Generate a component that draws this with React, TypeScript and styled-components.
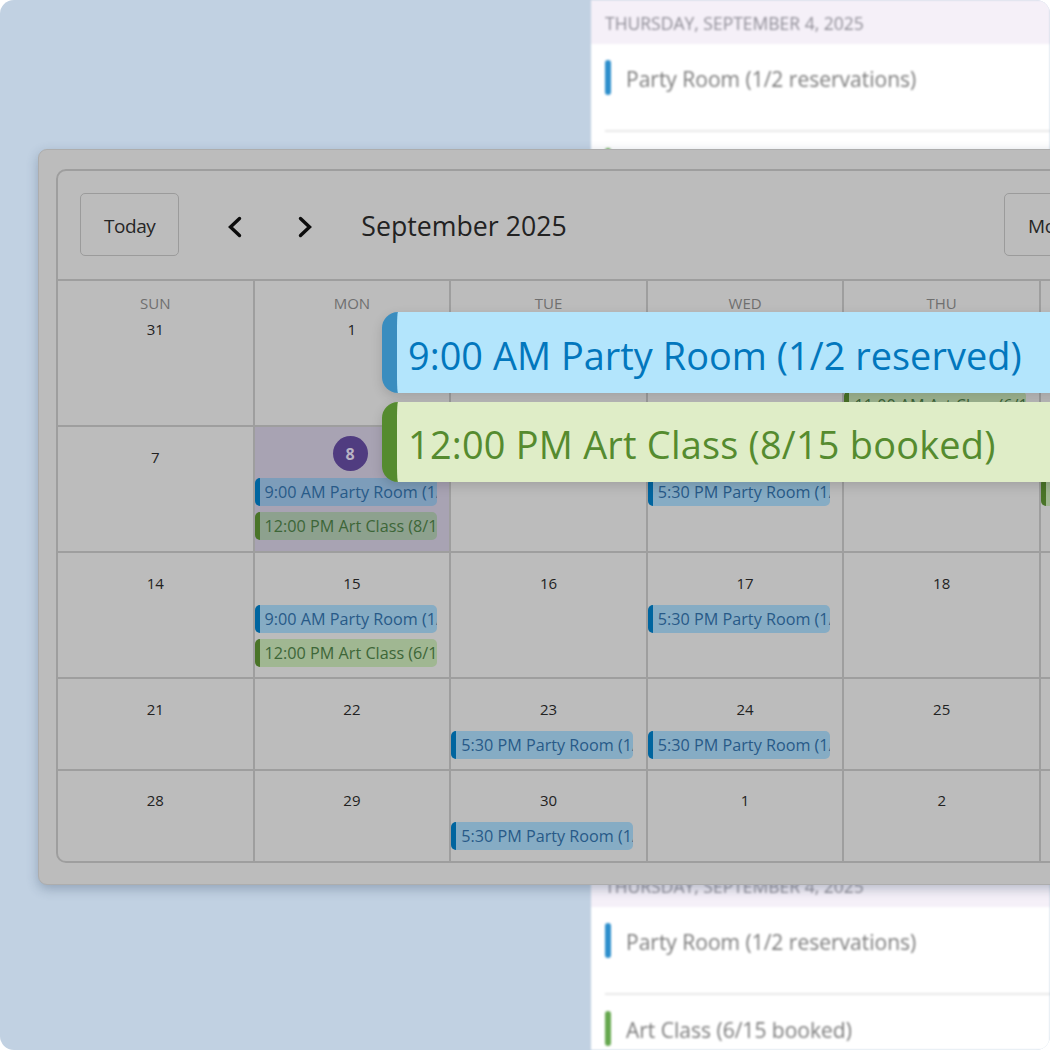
import React from "react";
import styled, { createGlobalStyle } from "styled-components";

const Global = createGlobalStyle`
  html, body { margin: 0; padding: 0; background: #fff; }
  body { font-family: "Open Sans", "Noto Sans", "Liberation Sans", sans-serif; }
`;

const Stage = styled.div`
  position: relative;
  width: 1050px;
  height: 1050px;
  overflow: hidden;
  border-radius: 14px;
  background: #c1d1e2;
  display: flex;
  padding-left: 591px;
  box-sizing: border-box;
`;

const AgendaPanel = styled.div`
  flex: 1;
  background: #fff;
  display: flex;
  flex-direction: column;
  gap: 643px;
  filter: blur(1.3px);
  border-top-right-radius: 10px;
  overflow: hidden;
`;

const AgendaGroup = styled.section`
  display: flex;
  flex-direction: column;
`;

const AgendaHeader = styled.div`
  height: 44px;
  box-sizing: border-box;
  background: #f5f0f8;
  padding: 12px 0 0 14px;
  font-size: 17.5px;
  line-height: 22px;
  font-weight: 500;
  color: #8f8d96;
`;

const AgendaRow = styled.div`
  display: flex;
  align-items: center;
  gap: 15px;
  height: 88px;
  box-sizing: border-box;
  margin-left: 14px;
  padding: 17px 0 36px;
  border-bottom: 2px solid #e8e8e8;
`;

const AgendaStripe = styled.span<{ $color: string }>`
  width: 6px;
  height: 35px;
  border-radius: 3px;
  background: ${(p) => p.$color};
`;

const AgendaText = styled.span`
  font-size: 21px;
  padding-top: 2px;
  color: #7c7c7c;
  font-weight: 500;
`;

const Card = styled.div`
  position: absolute;
  left: 38px;
  top: 149px;
  width: 1412px;
  height: 736px;
  box-sizing: border-box;
  padding: 19px 17px;
  background: #bcbcbc;
  border: 1px solid #adadad;
  border-radius: 9px;
  box-shadow: 0 4px 12px rgba(50, 70, 100, 0.32);
`;

const Calendar = styled.div`
  border: 2px solid #9e9e9e;
  border-radius: 10px;
  height: 694px;
  box-sizing: border-box;
  overflow: hidden;
  display: flex;
  flex-direction: column;
`;

const Toolbar = styled.div`
  height: 108px;
  flex: none;
  box-sizing: border-box;
  display: flex;
  align-items: center;
  padding: 0 22px 2px;
`;

const OutlineButton = styled.button`
  height: 63px;
  padding: 4px 23px 0;
  box-sizing: border-box;
  border: 1.5px solid #9b9b9b;
  border-radius: 5px;
  background: transparent;
  font-family: inherit;
  font-size: 19px;
  letter-spacing: -0.45px;
  color: #262626;
`;

const NavGroup = styled.div`
  display: flex;
  gap: 30px;
  margin: 0 36px;
`;

const NavButton = styled.button`
  width: 40px;
  height: 40px;
  border: 0;
  padding: 6px 0 0;
  background: transparent;
  display: flex;
  align-items: center;
  justify-content: center;
`;

const Title = styled.div`
  font-size: 26.7px;
  padding-top: 2px;
  color: #222;
`;

const ViewGroup = styled.div`
  margin-left: auto;
  display: flex;
  gap: 12px;
  width: 404px;
`;

const WeekGrid = styled.div`
  flex: 1;
  display: grid;
  grid-template-columns: repeat(7, 194.6px);
  grid-template-rows: 144px 124px 124px 90px 90px;
  gap: 2px;
  padding-top: 2px;
  background: #9e9e9e;
`;

const Cell = styled.div<{ $today?: boolean }>`
  background: ${(p) => (p.$today ? "#a8a3b3" : "#bcbcbc")};
  display: flex;
  flex-direction: column;
  overflow: hidden;
`;

const DayLabel = styled.div`
  margin-top: 12px;
  height: 20px;
  line-height: 20px;
  text-align: center;
  font-size: 15px;
  color: #6f6f6f;
`;

const dateMargins = [
  [6, 18],
  [20, 11],
  [20, 12],
  [20, 12],
  [19, 12],
];

const DateNumber = styled.div<{ $week: number }>`
  margin-top: ${(p) => dateMargins[p.$week][0]}px;
  margin-bottom: ${(p) => dateMargins[p.$week][1]}px;
  height: 20px;
  line-height: 20px;
  text-align: center;
  font-size: 15px;
  color: #222;
`;

const TodayBadge = styled.div`
  margin: 9px 0 7px 78px;
  width: 35px;
  height: 35px;
  border-radius: 50%;
  background: #503c80;
  color: #b8b3c4;
  font-size: 16px;
  font-weight: 700;
  display: flex;
  align-items: center;
  justify-content: center;
`;

type Tone = "blue" | "green";

const EventChip = styled.div<{ $tone: Tone; $dim?: boolean }>`
  width: 182px;
  height: 28px;
  flex: none;
  box-sizing: border-box;
  margin-bottom: 6px;
  padding-left: 5px;
  border-left: 5px solid ${(p) => (p.$tone === "blue" ? "#00659f" : "#4a7428")};
  border-radius: 5px;
  background: ${(p) =>
    p.$tone === "blue" ? (p.$dim ? "#7d9dba" : "#86acc4") : p.$dim ? "#8da18e" : "#a0b792"};
  color: ${(p) => (p.$tone === "blue" ? "#285a88" : "#3d6638")};
  font-size: 16.2px;
  line-height: 28.5px;
  white-space: nowrap;
  overflow: hidden;
`;

const PopupStack = styled.div`
  position: absolute;
  left: 382px;
  top: 312px;
  width: 800px;
  display: flex;
  flex-direction: column;
  gap: 9px;
`;

const Popup = styled.div<{ $tone: Tone }>`
  box-sizing: border-box;
  height: ${(p) => (p.$tone === "blue" ? 81 : 80)}px;
  display: flex;
  align-items: center;
  padding: 4px 0 0 11px;
  border-left: 15px solid ${(p) => (p.$tone === "blue" ? "#3a8dbf" : "#558b2f")};
  border-radius: 16px 0 0 16px;
  background: ${(p) => (p.$tone === "blue" ? "#b3e5fc" : "#dfedc7")};
  color: ${(p) => (p.$tone === "blue" ? "#0277bd" : "#558b2f")};
  font-size: 37.9px;
  letter-spacing: ${(p) => (p.$tone === "blue" ? 0.03 : 0.22)}px;
  white-space: nowrap;
  box-shadow: 0 4px 12px rgba(0, 0, 0, 0.14);
`;

type Ev = { tone: Tone; text: string };
type Day = { n: number; label?: string; today?: boolean; events?: Ev[] };

const party = (t: string, c = "1/2"): Ev => ({ tone: "blue", text: `${t} Party Room (${c} reserved)` });
const art = (t: string, c: string): Ev => ({ tone: "green", text: `${t} Art Class (${c} booked)` });

const weeks: Day[][] = [
  [
    { n: 31, label: "SUN" },
    { n: 1, label: "MON" },
    { n: 2, label: "TUE" },
    { n: 3, label: "WED" },
    { n: 4, label: "THU", events: [party("9:00 AM"), art("11:00 AM", "6/15")] },
    { n: 5, label: "FRI" },
    { n: 6, label: "SAT" },
  ],
  [
    { n: 7 },
    { n: 8, today: true, events: [party("9:00 AM"), art("12:00 PM", "8/15")] },
    { n: 9 },
    { n: 10, events: [party("5:30 PM")] },
    { n: 11 },
    { n: 12, events: [art("11:00 AM", "6/15")] },
    { n: 13 },
  ],
  [
    { n: 14 },
    { n: 15, events: [party("9:00 AM"), art("12:00 PM", "6/15")] },
    { n: 16 },
    { n: 17, events: [party("5:30 PM")] },
    { n: 18 },
    { n: 19 },
    { n: 20 },
  ],
  [
    { n: 21 },
    { n: 22 },
    { n: 23, events: [party("5:30 PM")] },
    { n: 24, events: [party("5:30 PM")] },
    { n: 25 },
    { n: 26 },
    { n: 27 },
  ],
  [
    { n: 28 },
    { n: 29 },
    { n: 30, events: [party("5:30 PM")] },
    { n: 1 },
    { n: 2 },
    { n: 3 },
    { n: 4 },
  ],
];

const Chevron = ({ right }: { right?: boolean }) => (
  <svg width="16" height="22" viewBox="0 0 16 22" fill="none">
    <path
      d={right ? "M3.5 2.5 L12.5 11 L3.5 19.5" : "M12.5 2.5 L3.5 11 L12.5 19.5"}
      stroke="#0c0c0c"
      strokeWidth="3.4"
      strokeLinecap="round"
      strokeLinejoin="miter"
    />
  </svg>
);

const AgendaDay = ({ rows }: { rows: [string, string][] }) => (
  <AgendaGroup>
    <AgendaHeader>THURSDAY, SEPTEMBER 4, 2025</AgendaHeader>
    {rows.map(([color, text]) => (
      <AgendaRow key={text}>
        <AgendaStripe $color={color} />
        <AgendaText>{text}</AgendaText>
      </AgendaRow>
    ))}
  </AgendaGroup>
);

export default function App() {
  const rows: [string, string][] = [
    ["#2e8fcc", "Party Room (1/2 reservations)"],
    ["#66a84f", "Art Class (6/15 booked)"],
  ];
  return (
    <>
      <Global />
      <Stage>
        <AgendaPanel>
          <AgendaDay rows={rows} />
          <AgendaDay rows={rows} />
        </AgendaPanel>
        <Card>
          <Calendar>
            <Toolbar>
              <OutlineButton>Today</OutlineButton>
              <NavGroup>
                <NavButton aria-label="Previous"><Chevron /></NavButton>
                <NavButton aria-label="Next"><Chevron right /></NavButton>
              </NavGroup>
              <Title>September 2025</Title>
              <ViewGroup>
                <OutlineButton>Month</OutlineButton>
                <OutlineButton>Week</OutlineButton>
                <OutlineButton>Day</OutlineButton>
              </ViewGroup>
            </Toolbar>
            <WeekGrid>
              {weeks.map((week, w) =>
                week.map((day, d) => (
                  <Cell key={`${w}-${d}`} $today={day.today}>
                    {day.label && <DayLabel>{day.label}</DayLabel>}
                    {day.today ? (
                      <TodayBadge>{day.n}</TodayBadge>
                    ) : (
                      <DateNumber $week={w}>{day.n}</DateNumber>
                    )}
                    {day.events?.map((ev) => (
                      <EventChip key={ev.text} $tone={ev.tone} $dim={day.today}>{ev.text}</EventChip>
                    ))}
                  </Cell>
                ))
              )}
            </WeekGrid>
          </Calendar>
        </Card>
        <PopupStack>
          <Popup $tone="blue">9:00 AM Party Room (1/2 reserved)</Popup>
          <Popup $tone="green">12:00 PM Art Class (8/15 booked)</Popup>
        </PopupStack>
      </Stage>
    </>
  );
}
